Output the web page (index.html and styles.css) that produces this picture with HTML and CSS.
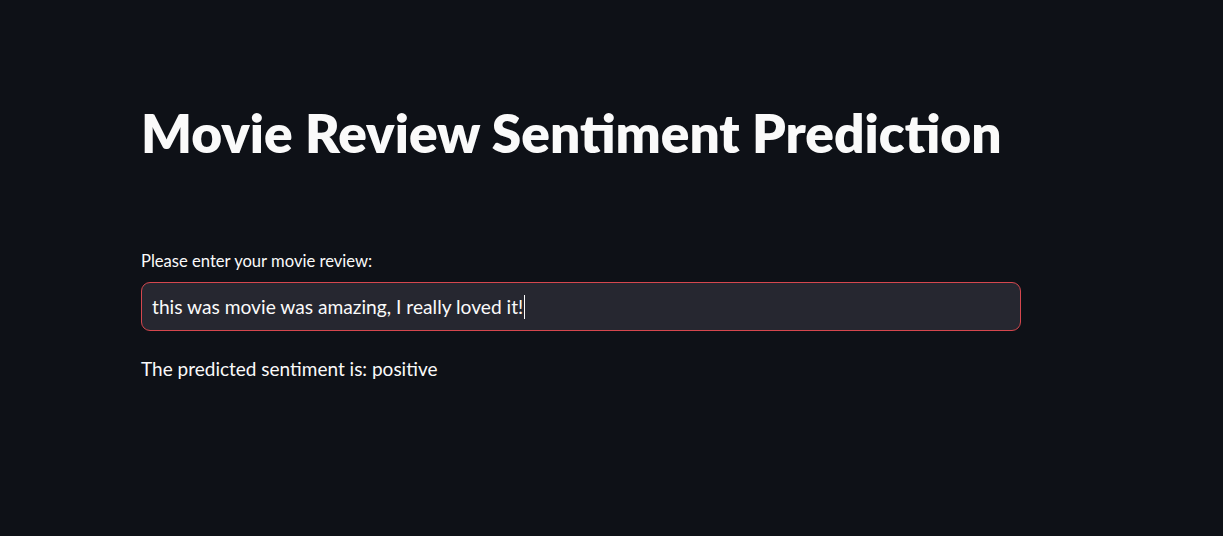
FILE: index.html
```html
<!DOCTYPE html>
<html lang="en">
<head>
<meta charset="utf-8">
<title>Movie Review Sentiment Prediction</title>
<link rel="stylesheet" href="styles.css">
</head>
<body>
<main class="app">
  <div class="block">
    <h1 class="title">Movie Review Sentiment Prediction</h1>
    <div class="field">
      <label class="label">Please enter your movie review:</label>
      <div class="input"><span class="input-text">this was movie was amazing, I really loved it!</span><span class="caret"></span></div>
    </div>
    <p class="result">The predicted sentiment is: positive</p>
  </div>
</main>
</body>
</html>
```
FILE: styles.css
```css
html, body {
  margin: 0;
  padding: 0;
  background: #0e1117;
  height: 100%;
}
body {
  font-family: Lato, "Source Sans Pro", sans-serif;
  color: #fafafa;
}
.app {
  padding: 97px 0 0 141px;
}
.block {
  width: 880px;
}
.title {
  margin: 0;
  font-size: 53.2px;
  font-weight: 800;
  line-height: 70px;
  letter-spacing: 0;
}
.field {
  margin-top: 83px;
}
.label {
  display: block;
  font-size: 16.6px;
  line-height: 22px;
  margin-bottom: 10px;
}
.input {
  box-sizing: border-box;
  height: 49px;
  border: 1px solid #d5474e;
  border-radius: 9px;
  background: #262730;
  display: flex;
  align-items: center;
  padding: 0 10px;
  font-size: 19.2px;
}
.caret {
  display: inline-block;
  width: 1px;
  height: 24px;
  background: #fafafa;
  margin-left: 1px;
}
.result {
  margin: 25px 0 0;
  font-size: 19px;
  line-height: 26px;
}
```
